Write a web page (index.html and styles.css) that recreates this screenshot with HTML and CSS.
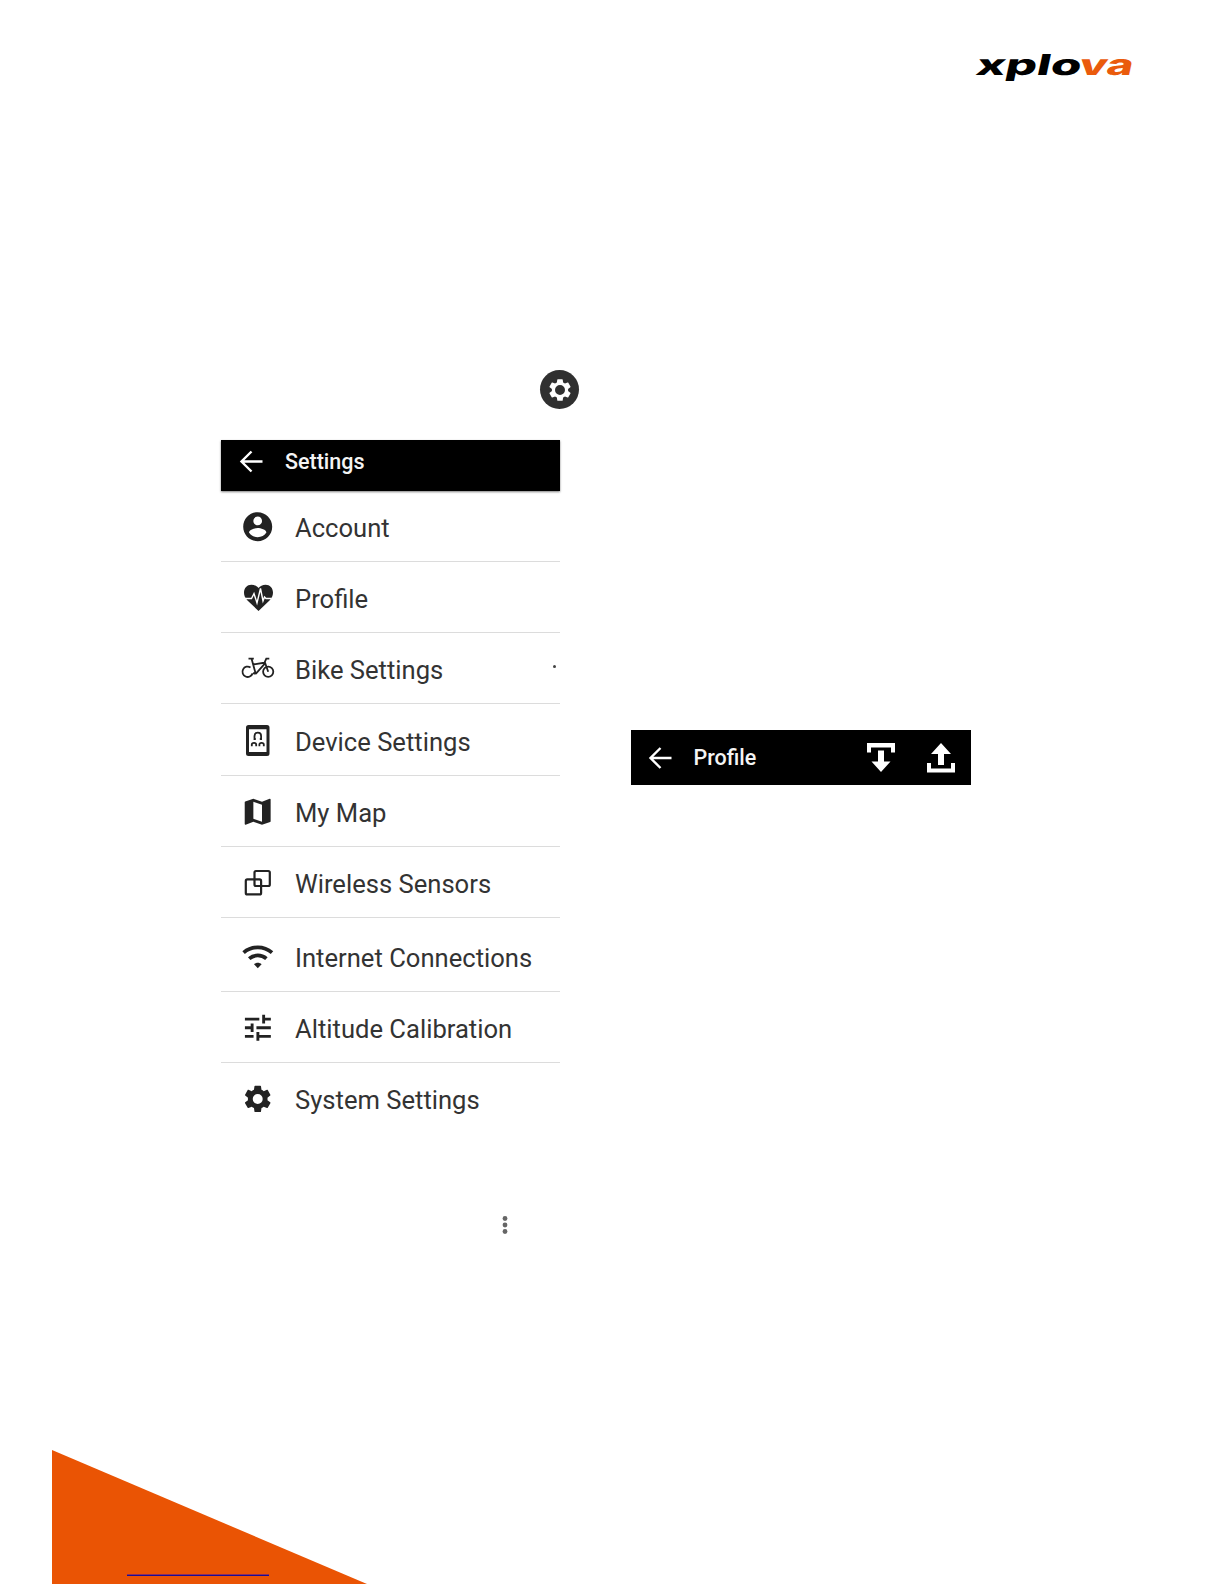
FILE: index.html
```html
<!DOCTYPE html>
<html lang="en">
<head>
  <meta charset="UTF-8">
  <title>Xplova Settings</title>
  <link rel="stylesheet" href="styles.css">
</head>
<body>
  <header class="page-header">
    <svg class="logo" width="164" height="36" viewBox="0 0 164 36">
      <g transform="skewX(-12)">
        <text x="8" y="25" textLength="105" lengthAdjust="spacingAndGlyphs">xplo</text>
        <text class="accent" x="111" y="25" textLength="54" lengthAdjust="spacingAndGlyphs">va</text>
      </g>
    </svg>
  </header>

  <div class="gear-badge">
    <svg width="26" height="26" viewBox="0 0 24 24"><path d="M19.43 12.98c.04-.32.07-.64.07-.98s-.03-.66-.07-.98l2.11-1.65c.19-.15.24-.42.12-.64l-2-3.46c-.12-.22-.39-.3-.61-.22l-2.49 1c-.52-.4-1.08-.73-1.69-.98l-.38-2.65C14.46 2.18 14.25 2 14 2h-4c-.25 0-.46.18-.49.42l-.38 2.65c-.61.25-1.17.59-1.69.98l-2.49-1c-.23-.09-.49 0-.61.22l-2 3.46c-.13.22-.07.49.12.64l2.11 1.65c-.04.32-.07.65-.07.98s.03.66.07.98l-2.11 1.65c-.19.15-.24.42-.12.64l2 3.46c.12.22.39.3.61.22l2.49-1c.52.4 1.08.73 1.69.98l.38 2.65c.03.24.24.42.49.42h4c.25 0 .46-.18.49-.42l.38-2.65c.61-.25 1.17-.59 1.69-.98l2.49 1c.23.09.49 0 .61-.22l2-3.46c.12-.22.07-.49-.12-.64l-2.11-1.65zM12 16.6a4.6 4.6 0 1 1 0-9.2 4.6 4.6 0 0 1 0 9.2z"/></svg>
  </div>

  <main class="screens">
    <section class="settings">
      <div class="bar">
        <svg class="back" width="24" height="24" viewBox="0 0 24 24"><path d="M23.5 11.5H2.5M12.5 1.5l-10 10 10 10"/></svg>
        <h1>Settings</h1>
      </div>
      <ul class="menu">
        <li>
          <svg viewBox="0 0 36 36"><path transform="translate(.3 1.3) scale(1.45)" d="M12 2C6.48 2 2 6.48 2 12s4.48 10 10 10 10-4.48 10-10S17.52 2 12 2zm0 3c1.66 0 3 1.34 3 3s-1.34 3-3 3-3-1.34-3-3 1.34-3 3-3zm0 14.2c-2.5 0-4.71-1.28-6-3.22.03-1.99 4-3.08 6-3.08s5.97 1.09 6 3.08c-1.29 1.94-3.5 3.22-6 3.22z"/></svg>
          <span>Account</span>
        </li>
        <li>
          <svg viewBox="0 0 36 36">
            <path d="M18.500 32 7.500 21.500C4.500 18.500 4 15.500 4 13.500 4 9 7.200 5.700 11.300 5.700c3 0 5.600 1.300 7.200 3.300 1.500-2 4.100-3.300 7.100-3.300 4.200 0 7.400 3.300 7.400 7.800 0 2-.6 5-3.500 8z"/>
            <path class="line light" d="M5 19.500h6.500l2.500-5 3 9.500 3.500-14.500 2.500 12.500 1.500-4 1.500 1.500h5.500"/>
          </svg>
          <span>Profile</span>
        </li>
        <li class="marked">
          <svg viewBox="0 0 36 36">
            <g class="line thin">
              <path d="M10.500 17.400a5.200 5.200 0 1 0 2.100 6"/>
              <circle cx="28.200" cy="21.800" r="5.100"/>
              <path d="M8.500 8.600h5.300M11.500 8.600l4.200 15.200M13 14.500l12.500-2M15.700 23.800l-2.800-.6M15.700 23.800l9.800-11M28.200 21.800 24.800 12l1.500-3.400h3"/>
            </g>
          </svg>
          <span>Bike Settings</span>
        </li>
        <li class="tall">
          <svg viewBox="0 0 36 36">
            <path fill-rule="evenodd" d="M8.500 3H27q2.500 0 2.500 2.500v26Q29.500 34 27 34H8.500Q6 34 6 31.500v-26Q6 3 8.500 3zM9 7.200v22.900h17.500V7.200z"/>
            <path class="line thin" d="M15.800 17h-1.300v-3q0-3.300 3.300-3.300t3.300 3.300v3h-1.300M11.800 24.300v-1.800q0-1.700 2.200-1.700t2.200 1.700v1.800M19.400 24.300v-1.800q0-1.700 2.200-1.700t2.200 1.700v1.800"/>
          </svg>
          <span>Device Settings</span>
        </li>
        <li>
          <svg viewBox="0 0 36 36"><path transform="translate(.4 1.5) scale(1.44)" d="m20.500 3-.16.03L15 5.100 9 3 3.360 4.900c-.21.07-.36.25-.36.48V20.500c0 .28.22.5.5.5l.16-.03L9 18.900l6 2.100 5.640-1.900c.21-.07.36-.25.36-.48V3.500c0-.28-.22-.5-.5-.5zM15 19l-6-2.110V5l6 2.110V19z"/></svg>
          <span>My Map</span>
        </li>
        <li>
          <svg viewBox="0 0 36 36">
            <rect class="line" x="14.500" y="7" width="15.300" height="15" rx="1.500"/>
            <rect class="line" x="5.800" y="15.400" width="15.300" height="15" rx="1.500"/>
          </svg>
          <span>Wireless Sensors</span>
        </li>
        <li class="taller">
          <svg viewBox="0 0 36 36">
            <path class="line wave" d="M3.600 14.600c8.200-7 20.200-7 28.400 0M9.200 20.600c5-4.200 12.200-4.200 17.200 0"/>
            <path d="M14 26.200c2.200-2 5.400-2 7.600 0L17.800 30.300z"/>
          </svg>
          <span>Internet Connections</span>
        </li>
        <li>
          <svg viewBox="0 0 36 36"><path transform="translate(.6 1.5) scale(1.44)" d="M3 17v2h6v-2H3zM3 5v2h10V5H3zm10 16v-2h8v-2h-8v-2h-2v6h2zM7 9v2H3v2h4v2h2V9H7zm14 4v-2H11v2h10zm-6-4h2V7h4V5h-4V3h-2v6z"/></svg>
          <span>Altitude Calibration</span>
        </li>
        <li>
          <svg viewBox="0 0 36 36"><path transform="translate(2 3.2) scale(1.31)" d="M19.43 12.98c.04-.32.07-.64.07-.98s-.03-.66-.07-.98l2.11-1.65c.19-.15.24-.42.12-.64l-2-3.46c-.12-.22-.39-.3-.61-.22l-2.49 1c-.52-.4-1.08-.73-1.69-.98l-.38-2.65C14.46 2.18 14.25 2 14 2h-4c-.25 0-.46.18-.49.42l-.38 2.65c-.61.25-1.17.59-1.69.98l-2.49-1c-.23-.09-.49 0-.61.22l-2 3.46c-.13.22-.07.49.12.64l2.11 1.65c-.04.32-.07.65-.07.98s.03.66.07.98l-2.11 1.65c-.19.15-.24.42-.12.64l2 3.46c.12.22.39.3.61.22l2.49-1c.52.4 1.08.73 1.69.98l.38 2.65c.03.24.24.42.49.42h4c.25 0 .46-.18.49-.42l.38-2.65c.61-.25 1.17-.59 1.69-.98l2.49 1c.23.09.49 0 .61-.22l2-3.46c.12-.22.07-.49-.12-.64l-2.11-1.65zM12 15.800a3.800 3.800 0 1 1 0-7.600 3.800 3.800 0 0 1 0 7.600z"/></svg>
          <span>System Settings</span>
        </li>
      </ul>
    </section>

    <section class="bar profile-bar">
      <svg class="back" width="24" height="24" viewBox="0 0 24 24"><path d="M23.5 12h-21M12.5 2l-10 10 10 10"/></svg>
      <h2>Profile</h2>
      <div class="actions">
        <svg width="30" height="30" viewBox="0 0 30 30"><path d="M1 0h28v9.500h-4V4.500H5v5H1zM12 7.500h6v11h6.500L15 29 5.500 18.500H12z"/></svg>
        <svg width="30" height="30" viewBox="0 0 30 30"><path d="M1 20h4v5.500h20V20h4v9.500H1zM12 22V11H5L15 0l10 11h-7v11z"/></svg>
      </div>
    </section>
  </main>

  <svg class="more" width="8" height="20" viewBox="0 0 8 20">
    <circle cx="4" cy="3.5" r="2.4"/><circle cx="4" cy="10" r="2.4"/><circle cx="4" cy="16.5" r="2.4"/>
  </svg>

  <footer class="corner">
    <a class="corner-link" href="#" aria-label="Website"></a>
  </footer>
</body>
</html>
```

FILE: styles.css
```css
* {
  box-sizing: border-box;
}

body {
  display: flex;
  flex-direction: column;
  height: 1584px;
  margin: 0;
  background: #fff;
  color: #333;
  font-family: Roboto, "Liberation Sans", sans-serif;
  overflow: hidden;
}

svg {
  display: block;
  flex-shrink: 0;
}

.page-header {
  display: flex;
  justify-content: flex-end;
  height: 370px;
  padding: 50px 88px 0 0;
}

.logo {
  overflow: visible;
  font-family: Inter, sans-serif;
  font-size: 29px;
  font-weight: 800;
}

.logo .accent {
  fill: #ea5b0c;
}

.gear-badge {
  display: flex;
  align-items: center;
  justify-content: center;
  width: 39px;
  height: 39px;
  margin-left: 540px;
  border-radius: 50%;
  background: #303030;
  fill: #fff;
}

.screens {
  display: flex;
  align-items: flex-start;
  gap: 71px;
  margin: 31px 0 0 221px;
}

.settings {
  width: 339px;
}

.bar {
  display: flex;
  align-items: center;
  height: 51px;
  padding: 0 15px 8px 18px;
  background: #000;
  color: #f4f4f4;
  box-shadow: 0 1px 2px rgba(0, 0, 0, 0.5);
}

.bar h1,
.bar h2 {
  margin: 0 0 0 22px;
  font-size: 21.5px;
  font-weight: 500;
  line-height: 26px;
}

.back {
  fill: none;
  stroke: #fff;
  stroke-width: 2.4;
}

.menu {
  margin: 0;
  padding: 0;
  list-style: none;
}

.menu li {
  display: flex;
  align-items: flex-end;
  gap: 19px;
  height: 71px;
  padding: 0 0 17px 19px;
  border-bottom: 1px solid #dcdcdc;
  font-size: 25.6px;
  line-height: 32px;
  white-space: nowrap;
}

.menu li.tall {
  height: 72px;
}

.menu li.taller {
  height: 74px;
}

.menu li:last-child {
  border-color: transparent;
}

.menu svg {
  width: 36px;
  height: 36px;
  fill: #222;
}

.menu .line {
  fill: none;
  stroke: #222;
  stroke-width: 2.2;
}

.menu .thin,
.menu .thin .line {
  stroke-width: 1.8;
}

.menu .light {
  stroke: #fff;
  stroke-width: 1.4;
}

.menu .wave {
  stroke-width: 3.8;
}

.marked::after {
  content: "";
  width: 3px;
  height: 3px;
  margin: 0 4px 18px auto;
  border-radius: 50%;
  background: #444;
}

.profile-bar {
  width: 340px;
  height: 55px;
  margin-top: 290px;
  padding: 0 15px 0 17px;
  box-shadow: none;
}

.profile-bar h2 {
  margin-left: 21.5px;
}

.actions {
  display: flex;
  gap: 30px;
  margin-left: auto;
  fill: #fff;
}

.more {
  margin: 81px 0 0 501px;
  fill: #666;
}

.corner {
  width: 315px;
  height: 134px;
  margin: auto 0 0 52px;
  padding: 124px 0 0 75px;
  background: #ea5404;
  clip-path: polygon(0 0, 100% 100%, 0 100%);
}

.corner-link {
  display: block;
  width: 142px;
  height: 2px;
  border-top: 1px solid #8a3060;
  background: #1b0c96;
}
```
